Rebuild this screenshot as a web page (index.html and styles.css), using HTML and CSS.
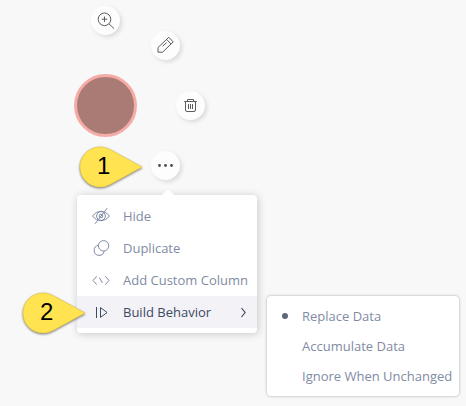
FILE: index.html
```html
<!DOCTYPE html>
<html lang="en">
<head>
<meta charset="utf-8">
<title>Build Behavior</title>
<link rel="stylesheet" href="styles.css">
</head>
<body>
<main class="canvas">
  <div class="node"></div>
  <button class="action zoom" aria-label="Zoom"><svg width="29" height="29" viewBox="0 0 29 29"><circle cx="13.5" cy="13.3" r="6.3"/><path d="M18 17.8l5 4.8M13.5 10.5v5.4M10.8 13.2h5.4"/></svg></button>
  <button class="action edit" aria-label="Edit"><svg width="29" height="29" viewBox="0 0 29 29"><path d="M7 21.2V16.5L17.8 6.3l4.4 4.6L11.6 21.2zM15.6 8.4l4.4 4.6M11.6 15.3l4-3.8"/></svg></button>
  <button class="action remove" aria-label="Delete"><svg width="29" height="29" viewBox="0 0 29 29"><path d="M8.2 10.5h12.6M11.5 10.3V8.5h6v1.8M9.5 10.5v8.5q0 1.5 1.5 1.5h7q1.5 0 1.5-1.5v-8.5M12.5 13v5M14.5 13v5M16.5 13v5"/></svg></button>
  <button class="action more" aria-label="More"><svg width="29" height="29" viewBox="0 0 29 29"><g class="dots"><circle cx="8.5" cy="14.5" r="1.4"/><circle cx="14.5" cy="14.5" r="1.4"/><circle cx="20.5" cy="14.5" r="1.4"/></g></svg></button>

  <ul class="menu main-menu">
    <li class="item"><svg class="icon" width="20" height="20" viewBox="0 0 20 20"><path d="M1.4 10Q5.2 5.2 10 5.2T18.6 10Q14.8 14.8 10 14.8T1.4 10zM16.2 2.2L4 17.8"/><circle cx="10" cy="10" r="4.4"/><circle cx="10" cy="10" r="1.8"/></svg>Hide</li>
    <li class="item"><svg class="icon" width="20" height="20" viewBox="0 0 20 20"><circle cx="12.6" cy="7.8" r="5.2"/><path d="M7.5 7.4a5 5 0 1 0 5.6 5.6"/></svg>Duplicate</li>
    <li class="item"><svg class="icon" width="20" height="20" viewBox="0 0 20 20"><path d="M5.7 6.3L2 10.5l3.7 4.2M14.3 6.3l3.7 4.2-3.7 4.2M8.3 7.7l3.2 5.2"/></svg>Add Custom Column</li>
    <li class="item selected"><svg class="icon" width="20" height="20" viewBox="0 0 20 20"><path d="M5.5 5v11M9.5 5.6v9.8l6.6-4.9z"/></svg>Build Behavior<svg class="chevron" width="8" height="12" viewBox="0 0 8 12"><path d="M1.5 2l3.6 4.5L1.5 11"/></svg></li>
  </ul>

  <ul class="menu submenu">
    <li class="option checked">Replace Data</li>
    <li class="option">Accumulate Data</li>
    <li class="option">Ignore When Unchanged</li>
  </ul>

  <div class="callout first"><svg width="64" height="42" viewBox="0 0 64 42"><path d="M63 21L31.5 38.2C27.5 40.4 24 41 21 41A20 20 0 0 1 21 1C24 1 27.5 1.6 31.5 3.8z"/></svg><span>1</span></div>
  <div class="callout second"><svg width="64" height="42" viewBox="0 0 64 42"><path d="M63 21L31.5 38.2C27.5 40.4 24 41 21 41A20 20 0 0 1 21 1C24 1 27.5 1.6 31.5 3.8z"/></svg><span>2</span></div>
</main>
</body>
</html>
```

FILE: styles.css
```css
* { box-sizing: border-box; }
body { margin: 0; background: #f8f8f8; }
.canvas {
  position: relative;
  width: 466px;
  height: 406px;
  overflow: hidden;
  font: 13px/20px "Open Sans", "Noto Sans", sans-serif;
  white-space: nowrap;
}
svg { display: block; flex: none; fill: none; stroke: currentColor; }
.node {
  position: absolute;
  left: 74px;
  top: 74px;
  width: 63px;
  height: 63px;
  border: 3px solid #f5aca6;
  border-radius: 50%;
  background: #aa7b75;
}
.action {
  position: absolute;
  width: 29px;
  height: 29px;
  padding: 0;
  border: 0;
  border-radius: 50%;
  background: #fdfdfd;
  color: #5c5c5c;
  box-shadow: 2px 2px 4px rgba(0, 0, 0, .12);
}
.zoom { left: 91px; top: 6px; }
.edit { left: 151px; top: 31px; }
.remove { left: 176px; top: 91px; }
.more { left: 151px; top: 151px; }
.dots { fill: #4a4a4a; stroke: none; }
.menu {
  position: absolute;
  margin: 0;
  padding: 5px 0;
  list-style: none;
  background: #fff;
  color: #7f8ba3;
  border-radius: 4px;
}
.main-menu {
  left: 77px;
  top: 195px;
  width: 180px;
  box-shadow: 1px 1px 9px rgba(0, 0, 0, .2);
}
.main-menu::before {
  content: "";
  position: absolute;
  left: 85px;
  top: -6px;
  border: 6px solid transparent;
  border-top: 0;
  border-bottom-color: #fff;
}
.item {
  display: flex;
  align-items: center;
  height: 32px;
  padding: 0 9px 0 14px;
}
.icon { margin-right: 12px; }
.selected { background: #f2f2f7; color: #3d4963; }
.chevron { margin-left: auto; stroke-width: 1.2; }
.submenu {
  left: 267px;
  top: 296px;
  width: 192px;
  box-shadow: 0 0 3px rgba(0, 0, 0, .32);
}
.option {
  display: flex;
  align-items: center;
  height: 30px;
  padding-left: 35px;
}
.checked::before {
  content: "";
  width: 6px;
  height: 6px;
  margin: 0 14px 0 -20px;
  border-radius: 50%;
  background: #5e6679;
}
.callout {
  position: absolute;
  width: 64px;
  height: 42px;
  font: 24px/42px "Liberation Sans", Arial, sans-serif;
  color: #000;
}
.callout svg {
  fill: #ffe350;
  stroke: #e3c53c;
  stroke-width: .6;
  filter: drop-shadow(0 1px 1px rgba(0, 0, 0, .5));
}
.callout span { position: absolute; left: 18px; top: -1px; }
.first { left: 79px; top: 146px; }
.second { left: 22px; top: 292px; }
```
